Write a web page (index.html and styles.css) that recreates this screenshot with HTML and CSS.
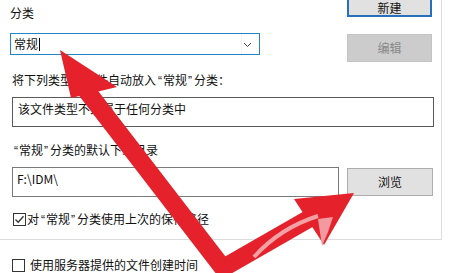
FILE: index.html
```html
<!DOCTYPE html>
<html lang="zh-CN">
<head>
<meta charset="utf-8">
<link rel="stylesheet" href="styles.css">
</head>
<body>
<div class="page">
  <div class="group">
    <div class="top">
      <div class="left">
        <div class="label">分类</div>
        <div class="combo">
          <span class="combo-text">常规</span><span class="caret"></span>
          <span class="combo-sep"></span>
          <svg class="chev" width="9" height="6" viewBox="0 0 9 6"><path d="M1 1 L4.5 4.5 L8 1" fill="none" stroke="#444" stroke-width="1"/></svg>
        </div>
      </div>
      <div class="right">
        <div class="btn btn-focus">新建</div>
        <div class="btn btn-disabled">编辑</div>
      </div>
    </div>
    <div class="label label-types">将下列类型的文件自动放入<span class="q qo">“</span>常规<span class="q qc">”</span>分类：</div>
    <div class="textbox textbox-wide">该文件类型不隶属于任何分类中</div>
    <div class="label label-dir"><span class="q qo qfirst">“</span>常规<span class="q qc">”</span>分类的默认下载目录</div>
    <div class="pathrow">
      <div class="textbox textbox-path">F:\IDM\</div>
      <div class="btn btn-browse">浏览</div>
    </div>
    <div class="check check-in">
      <span class="box"><svg width="11" height="11" viewBox="0 0 11 11"><path d="M1.5 5.5 L4.2 8.3 L9.5 2.2" fill="none" stroke="#333" stroke-width="1.3"/></svg></span>
      <span class="check-label">对<span class="q qo">“</span>常规<span class="q qc">”</span>分类使用上次的保存路径</span>
    </div>
  </div>
  <div class="check check-out">
    <span class="box"></span>
    <span class="check-label">使用服务器提供的文件创建时间</span>
  </div>

  <svg class="arrows" width="451" height="273" viewBox="0 0 451 273">
    <polyline points="86,90 223,268 312,217" fill="none" stroke="#e5222b" stroke-width="18" stroke-linejoin="miter" stroke-miterlimit="10"/>
    <polygon points="60,50 71,98 117,87" fill="#e5222b"/>
    <polygon points="354,193 294,199 324,245" fill="#e5222b"/>
    <path d="M254,257 Q280,228 318,216" fill="none" stroke="#f4a1a6" stroke-width="4"/>
    <polygon points="318,219 333,217 328,232 322,246" fill="#f29aa0"/>
  </svg>
</div>
</body>
</html>
```

FILE: styles.css
```css
html, body {
  margin: 0;
  padding: 0;
  background: #ffffff;
}
body {
  font-family: "Noto Sans CJK SC", "Noto Sans", sans-serif;
  font-size: 12px;
  line-height: 16px;
  color: #111;
  overflow: hidden;
}
.page {
  position: relative;
  width: 451px;
  height: 273px;
  overflow: hidden;
}
.group {
  width: 431px;
  height: 239px;
  padding-left: 10px;
  border-right: 1px solid #dcdcdc;
  border-bottom: 1px solid #dcdcdc;
}
.top {
  display: flex;
}
.left {
  width: 337px;
  padding-top: 5px;
}
.label {
  height: 16px;
  white-space: nowrap;
}
.q {
  font-family: "Liberation Sans", sans-serif;
  font-size: 12px;
}
.qo {
  margin-left: 2px;
  margin-right: 1px;
}
.qc {
  margin-left: 1px;
  margin-right: 2px;
}
.qfirst {
  margin-left: 3px;
}
.combo {
  position: relative;
  margin-top: 12px;
  width: 245px;
  height: 20px;
  border: 1px solid #1e86c4;
  display: flex;
  align-items: center;
  padding-left: 3px;
  box-sizing: content-box;
}
.combo-text {
  line-height: 16px;
}
.caret {
  display: inline-block;
  width: 1px;
  height: 13px;
  background: #000;
  margin-left: 1px;
}
.combo-sep {
  position: absolute;
  left: 230px;
  top: 0;
  width: 1px;
  height: 20px;
  background: #f1f1f1;
}
.chev {
  position: absolute;
  right: 7px;
  top: 8px;
}
.right {
  width: 85px;
  margin-top: -11px;
  display: flex;
  flex-direction: column;
  gap: 17px;
}
.btn {
  height: 28px;
  box-sizing: border-box;
  background: #e1e1e1;
  border: 1px solid #adadad;
  display: flex;
  align-items: center;
  justify-content: center;
  color: #111;
}
.btn-focus {
  border: 2px solid #2570b8;
  padding-top: 9px;
}
.btn-disabled {
  background: #cccccc;
  border-color: #c4c4c4;
  color: #888;
}
.label-types {
  margin-top: 10px;
  margin-left: 2px;
}
.textbox {
  box-sizing: border-box;
  height: 30px;
  padding: 3px 5px 0;
  background: #fff;
  white-space: nowrap;
}
.textbox-wide {
  margin-top: 9px;
  margin-left: 2px;
  width: 422px;
  border: 1px solid #5a5a5a;
}
.label-dir {
  margin-top: 15px;
  margin-left: 1px;
}
.pathrow {
  display: flex;
  align-items: flex-start;
  margin-top: 9px;
  margin-left: 2px;
}
.textbox-path {
  width: 327px;
  border: 1px solid #7a7a7a;
  padding-left: 4px;
}
.btn-browse {
  width: 86px;
  margin-top: 1px;
  margin-left: 8px;
  height: 28px;
}
.check {
  display: flex;
  align-items: center;
  height: 16px;
}
.box {
  width: 13px;
  height: 13px;
  box-sizing: border-box;
  border: 1px solid #333;
  background: #fff;
  display: flex;
  align-items: center;
  justify-content: center;
}
.check-in {
  margin-top: 14px;
  margin-left: 3px;
}
.check-in .check-label {
  margin-left: 1px;
}
.check-out {
  margin-top: 17px;
  margin-left: 12px;
}
.check-out .check-label {
  margin-left: 5px;
}
.arrows {
  position: absolute;
  left: 0;
  top: 0;
  pointer-events: none;
}
```
